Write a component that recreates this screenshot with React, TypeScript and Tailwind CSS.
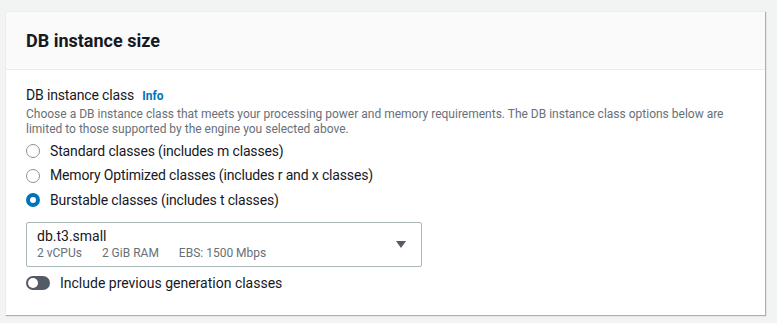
import { useState } from "react";

const options = [
  { id: "standard", label: "Standard classes (includes m classes)" },
  { id: "memory", label: "Memory Optimized classes (includes r and x classes)" },
  { id: "burstable", label: "Burstable classes (includes t classes)" },
];

export default function App() {
  const [selected, setSelected] = useState("burstable");
  const [prevGen, setPrevGen] = useState(false);

  return (
    <div
      className="min-h-[323px] bg-[#f2f3f3] pt-[11px] pl-[5px] pr-[12px] pb-[10px]"
      style={{ fontFamily: 'Roboto, "Liberation Sans", Arial, sans-serif' }}
    >
      <div className="bg-white border-t border-l border-[#eaeded] shadow-[1px_1px_1px_0_rgba(0,28,36,0.3)]">
        {/* Header */}
        <div className="h-[58px] bg-[#fafafa] border-b border-[#eaeded] px-[20px] flex items-center">
          <h2 className="text-[18px] font-bold text-[#16191f]">DB instance size</h2>
        </div>

        {/* Body */}
        <div className="px-[20px] pt-[14px] pb-[22px]">
          <div className="flex items-baseline gap-[8px] leading-[22px]">
            <span className="text-[14px] tracking-[-0.15px] text-[#16191f]">DB instance class</span>
            <span className="text-[12px] font-bold text-[#0073bb]">Info</span>
          </div>
          <p className="text-[12px] leading-[15px] text-[#687078]">
            Choose a DB instance class that meets your processing power and memory requirements. The DB instance class
            options below are limited to those supported by the engine you selected above.
          </p>

          <div className="mt-[2px] flex flex-col">
            {options.map((o) => {
              const checked = selected === o.id;
              return (
                <label
                  key={o.id}
                  onClick={() => setSelected(o.id)}
                  className="flex items-center h-[24.5px] gap-[10px] cursor-pointer text-[14px] tracking-[-0.15px] text-[#16191f]"
                >
                  <span
                    className={
                      checked
                        ? "w-[14px] h-[14px] rounded-full border-[4px] border-[#0073bb] bg-white"
                        : "w-[14px] h-[14px] rounded-full border-[1.5px] border-[#879596] bg-white"
                    }
                  />
                  {o.label}
                </label>
              );
            })}
          </div>

          {/* Select */}
          <div className="mt-[9px] w-[396px] h-[45px] border border-[#aab7b8] rounded-[2px] flex items-center justify-between pl-[10px] pr-[14px]">
            <div className="flex flex-col">
              <span className="text-[14px] leading-[18px] text-[#16191f]">db.t3.small</span>
              <div className="flex gap-[20px] text-[12px] leading-[16px] text-[#687078]">
                <span>2 vCPUs</span>
                <span>2 GiB RAM</span>
                <span>EBS: 1500 Mbps</span>
              </div>
            </div>
            <svg width="12" height="9" viewBox="0 0 12 9" className="mt-[1px]">
              <polygon points="1,1 11,1 6,8" fill="#545b64" />
            </svg>
          </div>

          {/* Toggle */}
          <div
            className="mt-[6px] flex items-center gap-[10px] cursor-pointer"
            onClick={() => setPrevGen(!prevGen)}
          >
            <span
              className={
                prevGen
                  ? "w-[24px] h-[14px] rounded-full bg-[#0073bb] flex items-center justify-end px-[2px]"
                  : "w-[24px] h-[14px] rounded-full bg-[#545b64] flex items-center px-[2px]"
              }
            >
              <span className="w-[10px] h-[10px] rounded-full bg-white" />
            </span>
            <span className="text-[14px] leading-[20px] text-[#16191f]">Include previous generation classes</span>
          </div>
        </div>
      </div>
    </div>
  );
}
